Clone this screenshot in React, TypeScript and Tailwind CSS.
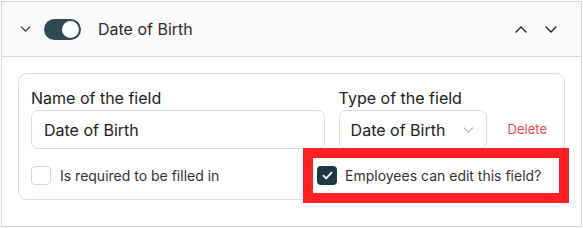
import React from "react";

function ChevronDown({ className }: { className?: string }) {
  return (
    <svg className={className} viewBox="0 0 12 7" fill="none" stroke="currentColor" strokeWidth="1.4" strokeLinecap="round" strokeLinejoin="round">
      <path d="M1 1l5 5 5-5" />
    </svg>
  );
}

function ChevronUp({ className }: { className?: string }) {
  return (
    <svg className={className} viewBox="0 0 12 7" fill="none" stroke="currentColor" strokeWidth="1.4" strokeLinecap="round" strokeLinejoin="round">
      <path d="M1 6l5-5 5 5" />
    </svg>
  );
}

export default function App() {
  return (
    <div className="w-[583px] h-[228px] bg-white p-px" style={{ fontFamily: "Inter, 'Noto Sans', sans-serif" }}>
      <div className="relative border border-[#d6d6d6] h-[226px] flex flex-col">
        <div className="h-[55px] bg-[#fafafa] border-b border-[#d6d6d6] flex items-center pl-[18px] pr-[24px]">
          <ChevronDown className="w-[11px] h-[6px] text-[#333]" />
          <div className="ml-[13px] w-[37px] h-[21px] rounded-full bg-[#2d4a51] flex items-center justify-end pr-[2px]">
            <div className="w-[17px] h-[17px] rounded-full bg-white" />
          </div>
          <span className="ml-[17px] text-[16px] text-[#2b2b2b]">Date of Birth</span>
          <div className="ml-auto flex items-center gap-[18px]">
            <ChevronUp className="w-[12px] h-[7px] text-[#222]" />
            <ChevronDown className="w-[12px] h-[7px] text-[#222]" />
          </div>
        </div>
        <div className="px-[16px] pt-[16px]">
          <div className="border border-[#dcdcdc] rounded-[9px] pl-[12px] pr-[17px] pt-[12px] pb-[13px]">
            <div className="flex items-end">
              <div className="flex-1 flex flex-col">
                <label className="text-[16px] leading-[24px] text-[#222]">Name of the field</label>
                <div className="h-[39px] border border-[#dcdcdc] rounded-[7px] flex items-center pl-[12px] text-[16px] text-[#222]">Date of Birth</div>
              </div>
              <div className="ml-[14px] w-[148px] flex flex-col">
                <label className="text-[16px] leading-[24px] text-[#222] whitespace-nowrap">Type of the field</label>
                <div className="h-[39px] border border-[#dcdcdc] rounded-[7px] flex items-center pl-[11px] pr-[12px] text-[16px] text-[#222]">
                  <span className="whitespace-nowrap">Date of Birth</span>
                  <ChevronDown className="ml-auto w-[11px] h-[6px] text-[#b5b5b5]" />
                </div>
              </div>
              <div className="ml-[21px] h-[39px] flex items-center text-[13px] text-[#f04b4b]">Delete</div>
            </div>
            <div className="flex items-center mt-[16px]">
              <div className="w-[286px] flex items-center">
                <div className="w-[20px] h-[19px] border border-[#d4d4d4] rounded-[4px] bg-white" />
                <span className="ml-[9px] text-[14px] text-[#333]">Is required to be filled in</span>
              </div>
              <div className="flex items-center">
                <div className="w-[20px] h-[19px] rounded-[4px] bg-[#1f3943] flex items-center justify-center">
                  <svg viewBox="0 0 12 10" className="w-[11px] h-[9px]" fill="none" stroke="white" strokeWidth="2" strokeLinecap="round" strokeLinejoin="round">
                    <path d="M1.5 5.2l3 3 6-6.5" />
                  </svg>
                </div>
                <span className="ml-[8px] text-[14px] text-[#333]">Employees can edit this field?</span>
              </div>
            </div>
          </div>
        </div>
        <div className="absolute left-[301px] top-[146px] w-[266px] h-[55px] border-[10px] border-[#ff2121]" />
      </div>
    </div>
  );
}
